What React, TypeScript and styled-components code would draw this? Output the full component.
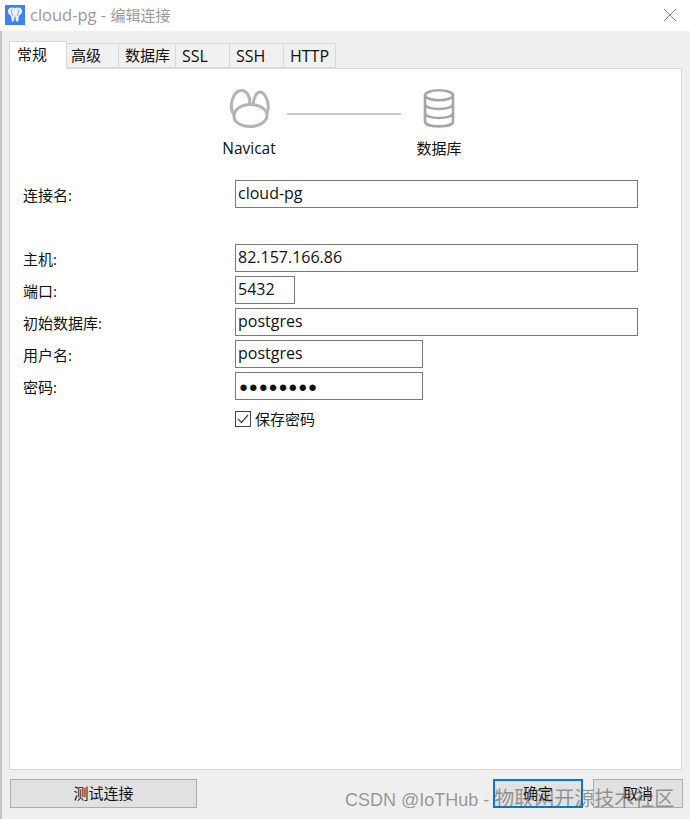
import React from 'react';
import styled, { createGlobalStyle } from 'styled-components';

const CJK = `"Open Sans", "Noto Sans CJK SC", sans-serif`;

const GlobalStyle = createGlobalStyle`
  html, body {
    margin: 0;
    padding: 0;
    background: #efefef;
  }
  * {
    box-sizing: border-box;
  }
`;

const Window = styled.div`
  position: relative;
  width: 690px;
  height: 819px;
  display: flex;
  flex-direction: column;
  overflow: hidden;
  font-family: ${CJK};
  color: #111;
`;

const TitleBar = styled.div`
  height: 31px;
  flex: none;
  display: flex;
  align-items: center;
  gap: 5px;
  padding: 0 13px 0 5px;
  background: #fff;
`;

const AppIcon = styled.svg`
  width: 20px;
  height: 20px;
  flex: none;
  margin-bottom: 1px;
`;

const WindowTitle = styled.span`
  flex: 1;
  font-size: 15px;
  color: #9a9a9a;
  margin-bottom: 2px;
`;

const TitleLatin = styled.span`
  font-size: 16.5px;
`;

const CloseIcon = styled.svg`
  width: 14px;
  height: 14px;
  margin: 0 0 1px;
`;

const Body = styled.div`
  flex: 1;
  display: flex;
  flex-direction: column;
  padding: 10px 8px 11px 7px;
  background: #efefef;
  border-left: 2px solid #c4c4c4;
`;

const TabRow = styled.div`
  display: flex;
  align-items: flex-end;
  height: 27px;
  flex: none;
  position: relative;
  z-index: 1;
`;

const Tab = styled.div<{ $width: number; $pad: number; $latin?: boolean; $active?: boolean }>`
  width: ${({ $width }) => $width}px;
  height: ${({ $active }) => ($active ? 28 : 25)}px;
  display: flex;
  align-items: center;
  padding-left: ${({ $pad }) => $pad}px;
  padding-bottom: ${({ $active }) => ($active ? 3 : 0)}px;
  font-size: ${({ $latin }) => ($latin ? 16 : 15)}px;
  line-height: 1;
  background: ${({ $active }) => ($active ? '#fff' : '#f0f0f0')};
  border: 1px solid #d9d9d9;
  border-left-width: ${({ $active }) => ($active ? 1 : 0)}px;
  border-bottom: ${({ $active }) => ($active ? 'none' : '1px solid #d9d9d9')};
  margin-bottom: ${({ $active }) => ($active ? -1 : 0)}px;
`;

const Panel = styled.div`
  flex: 1;
  display: flex;
  flex-direction: column;
  background: #fff;
  border: 1px solid #d9d9d9;
  padding: 20px 43px 0 13px;
`;

const Diagram = styled.div`
  display: flex;
  align-items: flex-start;
  margin-left: 188px;
  height: 91px;
`;

const DiagramNode = styled.div`
  width: 76px;
  display: flex;
  flex-direction: column;
  align-items: center;
  gap: 8px;
`;

const NodeLabel = styled.span<{ $latin?: boolean }>`
  font-size: ${({ $latin }) => ($latin ? 15.5 : 15)}px;
  line-height: 22px;
  white-space: nowrap;
`;

const NodeIcon = styled.svg`
  width: 44px;
  height: 40px;
  display: block;
`;

const Connector = styled.div`
  width: 114px;
  height: 2px;
  margin-top: 24px;
  background: #c8c8c8;
`;

const Form = styled.div`
  display: flex;
  flex-direction: column;
  gap: 4px;
`;

const Row = styled.div<{ $gapAfter?: boolean }>`
  display: grid;
  grid-template-columns: 212px 1fr;
  align-items: center;
  min-height: 28px;
  margin-bottom: ${({ $gapAfter }) => ($gapAfter ? 32 : 0)}px;
`;

const Label = styled.span`
  font-size: 15px;
  line-height: 1;
  padding-top: 2px;
`;

const Field = styled.div<{ $width?: number }>`
  width: ${({ $width }) => ($width ? `${$width}px` : '100%')};
  height: 28px;
  display: flex;
  align-items: center;
  padding: 0 2px 2px;
  font-size: 16px;
  line-height: 1;
  background: #fff;
  border: 1px solid #7a7a7a;
`;

const Dots = styled.span`
  font-family: "Liberation Sans", sans-serif;
  font-size: 15px;
  letter-spacing: 0.8px;
  padding: 2px 0 0 1px;
`;

const CheckRow = styled.div`
  display: flex;
  align-items: center;
  gap: 4px;
  margin: 11px 0 0 212px;
  font-size: 15px;
  line-height: 1;
`;

const CheckBox = styled.svg`
  width: 16px;
  height: 16px;
  flex: none;
`;

const Footer = styled.div`
  flex: none;
  display: flex;
  align-items: stretch;
  gap: 10px;
  height: 29px;
  margin: 9px -1px 0 0;
  padding-left: 1px;
`;

const Button = styled.div<{ $width: number; $primary?: boolean }>`
  width: ${({ $width }) => $width}px;
  display: flex;
  align-items: center;
  justify-content: center;
  padding-bottom: 3px;
  font-size: 15px;
  background: #e1e1e1;
  border: ${({ $primary }) => ($primary ? '2px solid #0078d7' : '1px solid #adadad')};
`;

const Spacer = styled.div`
  flex: 1;
`;

const Watermark = styled.span`
  position: absolute;
  left: 345px;
  top: 787px;
  font-family: "Liberation Sans", "Noto Sans CJK SC", sans-serif;
  font-size: 18px;
  line-height: 24px;
  white-space: nowrap;
  color: rgba(90, 90, 90, 0.6);
`;

const WatermarkCjk = styled.span`
  font-size: 20px;
`;

const tabs = [
  { label: '高级', width: 52, pad: 4 },
  { label: '数据库', width: 57, pad: 6 },
  { label: 'SSL', width: 54, pad: 6, latin: true },
  { label: 'SSH', width: 54, pad: 6, latin: true },
  { label: 'HTTP', width: 52, pad: 6, latin: true },
];

const NavicatIcon = () => (
  <NodeIcon viewBox="0 0 44 40" fill="none" stroke="#b4b4b4" strokeWidth="3" strokeLinecap="round">
    <path d="M23.5 15.5 C15 15.5 7 20 7 27 C7 33 14 37.5 23 37.5 C32 37.5 40 33 40 26 C40 20 32 15.5 23.5 15.5" />
    <path d="M7 26 C0.5 16 7 1.5 14.5 1.5 C20 1.5 24 9 22.5 15.5" />
    <path d="M26.5 15.5 C26 9 30 2.5 33.5 3 C37.5 3.5 44 15 40 24" />
  </NodeIcon>
);

const DatabaseIcon = () => (
  <NodeIcon viewBox="0 0 44 40" fill="none" stroke="#a6a6a6" strokeWidth="2.6">
    <ellipse cx="22" cy="6.3" rx="14" ry="5" />
    <path d="M8 6.3 V32.5 C8 35.5 14 37.4 22 37.4 C30 37.4 36 35.5 36 32.5 V6.3" />
    <path d="M8 15 C8 18 14 20 22 20 C30 20 36 18 36 15" />
    <path d="M8 24 C8 27 14 29 22 29 C30 29 36 27 36 24" />
  </NodeIcon>
);

const App: React.FC = () => {
  return (
    <>
      <GlobalStyle />
      <Window>
        <TitleBar>
          <AppIcon viewBox="0 0 20 20">
            <rect width="20" height="20" fill="#3b82f0" />
            <path
              d="M3 5 C4 2 8 2 10 3 C12 2 16 2 17 5 C18 8 15 10 14 11 L13 17 L11 16 L10 10 L9 16 L7 17 L6 11 C5 10 2 8 3 5Z"
              fill="#e8f0fd"
            />
            <path d="M7 4 C6 7 7 9 8 11 M13 4 C14 7 13 9 12 11" stroke="#7fa9ee" strokeWidth="1" fill="none" />
          </AppIcon>
          <WindowTitle><TitleLatin>cloud-pg - </TitleLatin>编辑连接</WindowTitle>
          <CloseIcon viewBox="0 0 14 14" stroke="#8c8c8c" strokeWidth="1">
            <path d="M1 1 L13 13 M13 1 L1 13" />
          </CloseIcon>
        </TitleBar>
        <Body>
          <TabRow>
            <Tab $width={58} $pad={7} $active>常规</Tab>
            {tabs.map((tab) => (
              <Tab key={tab.label} $width={tab.width} $pad={tab.pad} $latin={tab.latin}>{tab.label}</Tab>
            ))}
          </TabRow>
          <Panel>
            <Diagram>
              <DiagramNode>
                <NavicatIcon />
                <NodeLabel $latin>Navicat</NodeLabel>
              </DiagramNode>
              <Connector />
              <DiagramNode>
                <DatabaseIcon />
                <NodeLabel>数据库</NodeLabel>
              </DiagramNode>
            </Diagram>
            <Form>
              <Row $gapAfter>
                <Label>连接名:</Label>
                <Field>cloud-pg</Field>
              </Row>
              <Row>
                <Label>主机:</Label>
                <Field>82.157.166.86</Field>
              </Row>
              <Row>
                <Label>端口:</Label>
                <Field $width={60}>5432</Field>
              </Row>
              <Row>
                <Label>初始数据库:</Label>
                <Field>postgres</Field>
              </Row>
              <Row>
                <Label>用户名:</Label>
                <Field $width={188}>postgres</Field>
              </Row>
              <Row>
                <Label>密码:</Label>
                <Field $width={188}><Dots>●●●●●●●●</Dots></Field>
              </Row>
            </Form>
            <CheckRow>
              <CheckBox viewBox="0 0 16 16" fill="none">
                <rect x="0.5" y="0.5" width="15" height="15" fill="#fff" stroke="#444" />
                <path d="M3 8 L6.5 11.5 L13 4" stroke="#444" strokeWidth="1.2" />
              </CheckBox>
              保存密码
            </CheckRow>
          </Panel>
          <Footer>
            <Button $width={187}>测试连接</Button>
            <Spacer />
            <Button $width={90} $primary>确定</Button>
            <Button $width={90}>取消</Button>
          </Footer>
        </Body>
        <Watermark>CSDN @IoTHub - <WatermarkCjk>物联网开源技术社区</WatermarkCjk></Watermark>
      </Window>
    </>
  );
};

export default App;
